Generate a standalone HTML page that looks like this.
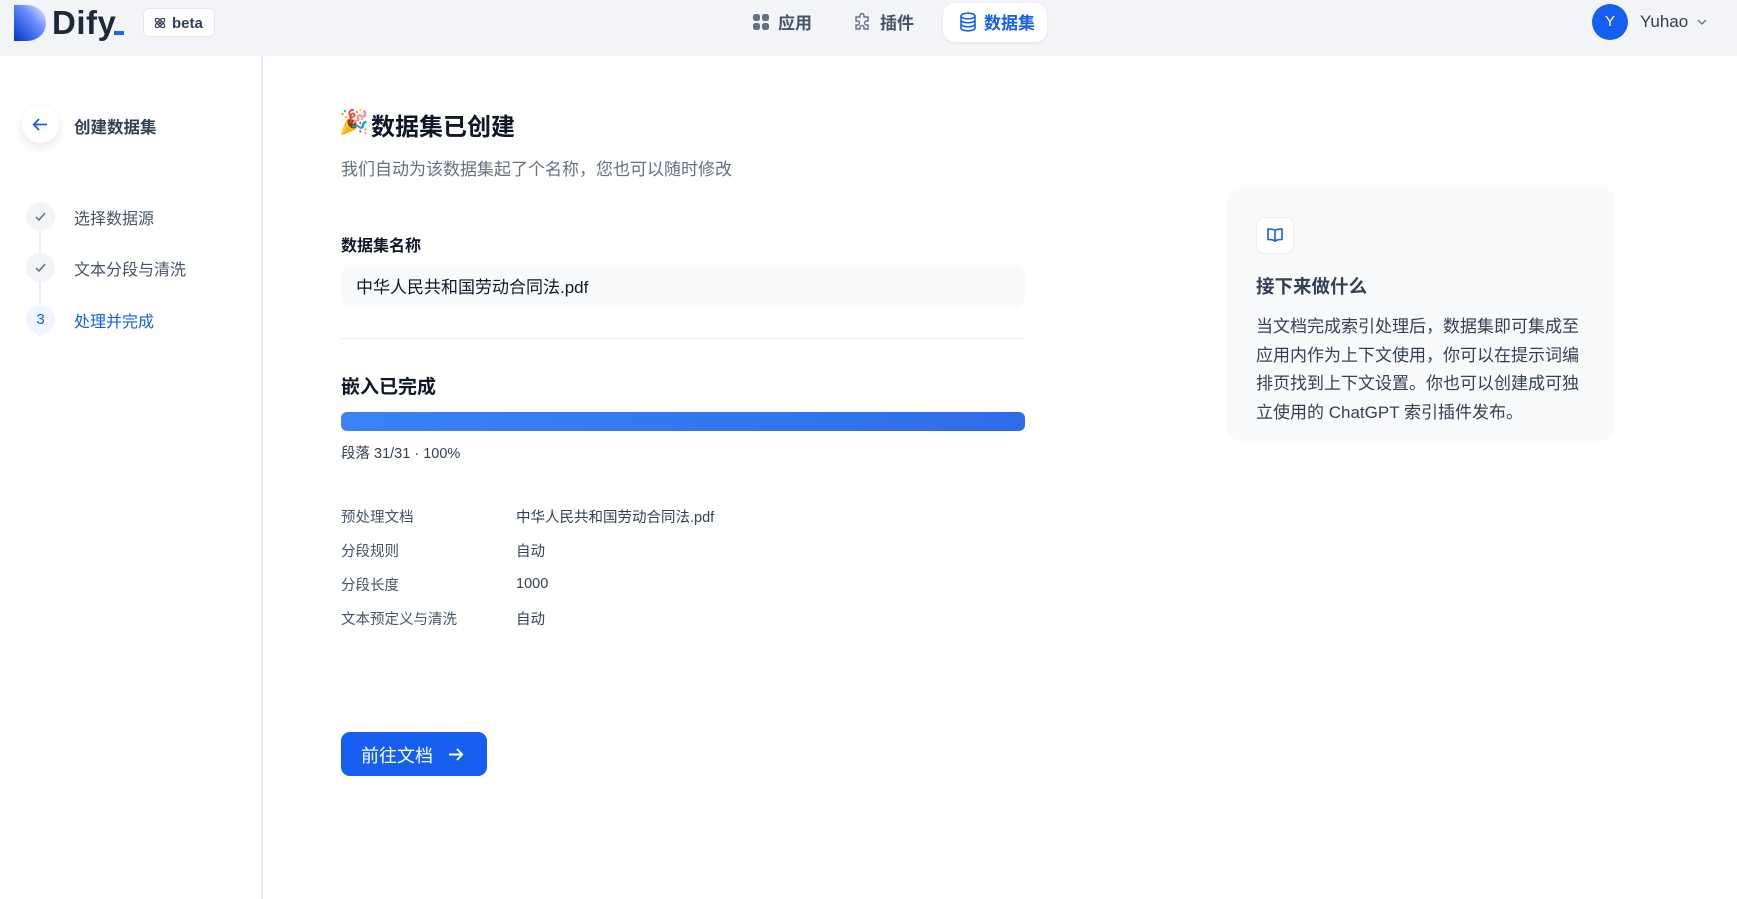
<!DOCTYPE html>
<html><head><meta charset="utf-8">
<style>
*{margin:0;padding:0;box-sizing:border-box}
body{width:1737px;height:899px;overflow:hidden;background:#fff;font-family:"Liberation Sans","Noto Sans CJK SC",sans-serif;color:#1d2939;position:relative}
.abs{position:absolute}
.hdr{left:0;top:0;width:1737px;height:56px;background:#f2f4f7}
.side{left:0;top:56px;width:263px;height:843px;background:#fff;border-right:2px solid #eaecf0}
.t{white-space:nowrap}
</style></head><body>
<div class="abs hdr">
  <svg class="abs" style="left:14px;top:5px" width="32" height="36" viewBox="0 0 32 36">
    <defs><linearGradient id="g" x1="0" y1="1" x2="1" y2="0"><stop offset="0" stop-color="#0033cc"/><stop offset="0.6" stop-color="#6a8dff"/><stop offset="1" stop-color="#f0f4ff"/></linearGradient></defs>
    <path d="M0 0H12C24 0 32 8 32 18C32 28 24 36 12 36H0Z" fill="url(#g)"/>
  </svg>
  <div class="abs t" style="left:52px;top:4px;font-size:33px;font-weight:700;color:#1d2939;letter-spacing:0.5px">Dify</div>
  <div class="abs" style="left:114px;top:31px;width:10px;height:4px;background:#2563eb"></div>
  <div class="abs" style="left:143px;top:8px;width:72px;height:29px;background:#fff;border:1px solid #e4e7ec;border-radius:6px"></div>
  <svg class="abs" style="left:153px;top:16px" width="14" height="14" viewBox="0 0 14 14" fill="none" stroke="#344054" stroke-width="1.2"><ellipse cx="7" cy="7" rx="6" ry="2.6" transform="rotate(45 7 7)"/><ellipse cx="7" cy="7" rx="6" ry="2.6" transform="rotate(-45 7 7)"/><circle cx="7" cy="7" r="1" fill="#344054"/></svg>
  <div class="abs t" style="left:172px;top:15px;font-size:15px;font-weight:700;color:#344054">beta</div>

  <svg class="abs" style="left:753px;top:14px" width="16" height="16" viewBox="0 0 16 16" fill="#667085"><rect x="0" y="0" width="7" height="7" rx="2.5"/><rect x="9" y="0" width="7" height="7" rx="2.5"/><rect x="0" y="9" width="7" height="7" rx="2.5"/><rect x="9" y="9" width="7" height="7" rx="2.5"/></svg>
  <div class="abs t" style="left:778px;top:9px;font-size:17px;font-weight:700;color:#475467">应用</div>
  <svg class="abs" style="left:853px;top:12px" width="20" height="20" viewBox="0 0 20 20" fill="none" stroke="#667085" stroke-width="1.4"><path d="M7 3.5a2 2 0 0 1 4 0V5h4v4h-1.5a2 2 0 0 0 0 4H15v4h-4v-1.5a2 2 0 0 0-4 0V17H3v-4h1.5a2 2 0 0 0 0-4H3V5h4z"/></svg>
  <div class="abs t" style="left:880px;top:9px;font-size:17px;font-weight:700;color:#475467">插件</div>
  <div class="abs" style="left:943px;top:3px;width:104px;height:39px;background:#fff;border-radius:12px;box-shadow:0 1px 3px rgba(16,24,40,.08)"></div>
  <svg class="abs" style="left:959px;top:12px" width="18" height="20" viewBox="0 0 18 20" fill="none" stroke="#155eef" stroke-width="1.6"><ellipse cx="9" cy="4" rx="7" ry="2.8"/><path d="M2 4v12c0 1.6 3.1 2.8 7 2.8s7-1.2 7-2.8V4M2 8c0 1.6 3.1 2.8 7 2.8s7-1.2 7-2.8M2 12c0 1.6 3.1 2.8 7 2.8s7-1.2 7-2.8"/></svg>
  <div class="abs t" style="left:984px;top:9px;font-size:17px;font-weight:700;color:#155eef">数据集</div>

  <div class="abs" style="left:1592px;top:4px;width:36px;height:36px;border-radius:50%;background:#155eef;color:#fff;font-size:15px;text-align:center;line-height:36px">Y</div>
  <div class="abs t" style="left:1640px;top:12px;font-size:17px;color:#344054">Yuhao</div>
  <svg class="abs" style="left:1697px;top:18px" width="10" height="8" viewBox="0 0 10 8" fill="none" stroke="#667085" stroke-width="1.3"><path d="M1 2l4 4 4-4"/></svg>
</div>

<div class="abs side">
  <div class="abs" style="left:22px;top:50px;width:37px;height:37px;border-radius:50%;background:#fff;box-shadow:0 4px 10px rgba(16,24,40,.1)"></div>
  <svg class="abs" style="left:31px;top:59px" width="19" height="19" viewBox="0 0 19 19" fill="none" stroke="#155eef" stroke-width="1.8"><path d="M16 9.5H3M8 4L2.8 9.5 8 15"/></svg>
  <div class="abs t" style="left:74px;top:58px;font-size:16.5px;font-weight:700;color:#344054">创建数据集</div>

  <div class="abs" style="left:39px;top:174px;width:2px;height:106px;background:#eaecf0"></div>
  <div class="abs" style="left:26px;top:146px;width:29px;height:29px;border-radius:50%;background:#f2f4f7"></div>
  <svg class="abs" style="left:34px;top:154px" width="13" height="13" viewBox="0 0 13 13" fill="none" stroke="#667085" stroke-width="1.5"><path d="M2 7l3 3 6-7"/></svg>
  <div class="abs t" style="left:74px;top:149px;font-size:16px;color:#475467">选择数据源</div>
  <div class="abs" style="left:26px;top:197px;width:29px;height:29px;border-radius:50%;background:#f2f4f7"></div>
  <svg class="abs" style="left:34px;top:205px" width="13" height="13" viewBox="0 0 13 13" fill="none" stroke="#667085" stroke-width="1.5"><path d="M2 7l3 3 6-7"/></svg>
  <div class="abs t" style="left:74px;top:200px;font-size:16px;color:#475467">文本分段与清洗</div>
  <div class="abs" style="left:26px;top:249px;width:29px;height:29px;border-radius:50%;background:#eff4ff;color:#155eef;font-size:15px;text-align:center;line-height:29px">3</div>
  <div class="abs t" style="left:74px;top:252px;font-size:16px;color:#155eef">处理并完成</div>
</div>

<div class="abs t" style="left:339px;top:108px;font-size:24px">🎉</div>
<div class="abs t" style="left:371px;top:107px;font-size:24px;font-weight:700;color:#101828">数据集已创建</div>
<div class="abs t" style="left:341px;top:155px;font-size:17px;color:#667085">我们自动为该数据集起了个名称，您也可以随时修改</div>
<div class="abs t" style="left:341px;top:232px;font-size:16px;font-weight:700;color:#101828">数据集名称</div>
<div class="abs" style="left:341px;top:265px;width:684px;height:43px;background:#f9fafb;border-radius:10px"></div>
<div class="abs t" style="left:356px;top:273px;font-size:17px;color:#101828">中华人民共和国劳动合同法.pdf</div>
<div class="abs" style="left:341px;top:338px;width:684px;height:1px;background:#eaecf0"></div>
<div class="abs t" style="left:341px;top:372px;font-size:19px;font-weight:700;color:#101828">嵌入已完成</div>
<div class="abs" style="left:341px;top:412px;width:684px;height:19px;border-radius:6px;background:linear-gradient(90deg,#3b82f6,#2f6ceb)"></div>
<div class="abs t" style="left:341px;top:442px;font-size:14.5px;color:#344054">段落 31/31 · 100%</div>

<div class="abs t" style="left:341px;top:506px;font-size:14.5px;color:#475467">预处理文档</div>
<div class="abs t" style="left:516px;top:506px;font-size:14.5px;color:#344054">中华人民共和国劳动合同法.pdf</div>
<div class="abs t" style="left:341px;top:540px;font-size:14.5px;color:#475467">分段规则</div>
<div class="abs t" style="left:516px;top:540px;font-size:14.5px;color:#344054">自动</div>
<div class="abs t" style="left:341px;top:574px;font-size:14.5px;color:#475467">分段长度</div>
<div class="abs t" style="left:516px;top:576px;font-size:14.5px;color:#344054">1000</div>
<div class="abs t" style="left:341px;top:608px;font-size:14.5px;color:#475467">文本预定义与清洗</div>
<div class="abs t" style="left:516px;top:608px;font-size:14.5px;color:#344054">自动</div>

<div class="abs" style="left:341px;top:732px;width:146px;height:44px;border-radius:9px;background:#155eef"></div>
<div class="abs t" style="left:361px;top:742px;font-size:18px;color:#fff">前往文档</div>
<svg class="abs" style="left:446px;top:745px" width="19" height="19" viewBox="0 0 19 19" fill="none" stroke="#fff" stroke-width="1.9"><path d="M3 9.5h13M11 4l5.2 5.5L11 15"/></svg>

<div class="abs" style="left:1227px;top:187px;width:388px;height:254px;background:#f9fafb;border-radius:14px"></div>
<div class="abs" style="left:1256px;top:217px;width:38px;height:37px;background:#fff;border:1px solid #eaecf0;border-radius:8px"></div>
<svg class="abs" style="left:1266px;top:226px" width="18" height="18" viewBox="0 0 18 18" fill="none" stroke="#155eef" stroke-width="1.6"><path d="M9 4.5C7.5 3.3 5 3 2 3v10.5c3 0 5.5.3 7 1.5 1.5-1.2 4-1.5 7-1.5V3c-3 0-5.5.3-7 1.5zM9 4.5V16"/></svg>
<div class="abs t" style="left:1256px;top:273px;font-size:18.5px;font-weight:700;color:#344054">接下来做什么</div>
<div class="abs" style="left:1256px;top:313px;width:330px;font-size:17px;line-height:28.5px;color:#344054">当文档完成索引处理后，数据集即可集成至应用内作为上下文使用，你可以在提示词编排页找到上下文设置。你也可以创建成可独立使用的 ChatGPT 索引插件发布。</div>
</body></html>
